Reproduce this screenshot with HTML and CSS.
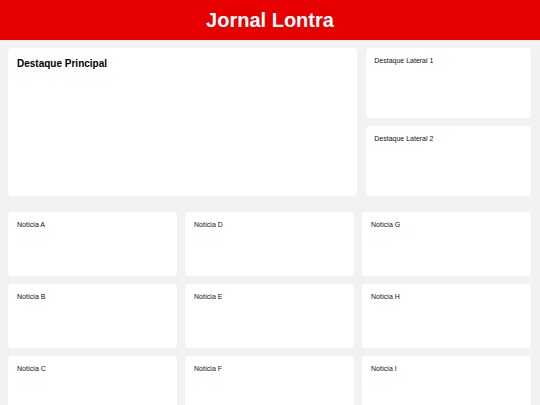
FILE: index.html
```html
<!DOCTYPE html>
<html lang="pt">
<head>
<meta charset="utf-8">
<title>Jornal Lontra</title>
<link rel="stylesheet" href="styles.css">
</head>
<body>
<header class="site-header">
  <h1 class="site-title">Jornal Lontra</h1>
</header>
<section class="highlights">
  <article class="card card-main"><h2 class="main-title">Destaque Principal</h2></article>
  <div class="side">
    <article class="card card-side"><h3 class="label">Destaque Lateral 1</h3></article>
    <article class="card card-side"><h3 class="label">Destaque Lateral 2</h3></article>
  </div>
</section>
<section class="news">
  <article class="card card-news"><h3 class="label">Notícia A</h3></article>
  <article class="card card-news"><h3 class="label">Notícia D</h3></article>
  <article class="card card-news"><h3 class="label">Notícia G</h3></article>
  <article class="card card-news"><h3 class="label">Notícia B</h3></article>
  <article class="card card-news"><h3 class="label">Notícia E</h3></article>
  <article class="card card-news"><h3 class="label">Notícia H</h3></article>
  <article class="card card-news"><h3 class="label">Notícia C</h3></article>
  <article class="card card-news"><h3 class="label">Notícia F</h3></article>
  <article class="card card-news"><h3 class="label">Notícia I</h3></article>
</section>
</body>
</html>
```
FILE: styles.css
```css
* { box-sizing: border-box; }
html, body {
  margin: 0;
  padding: 0;
  background: #f2f2f2;
  font-family: "Liberation Sans", Arial, sans-serif;
  color: #111;
}
.site-header {
  background: #e60000;
  height: 40px;
  display: flex;
  align-items: center;
  justify-content: center;
}
.site-title {
  margin: 0;
  color: #fff;
  font-size: 20px;
  font-weight: bold;
  line-height: 1;
}
.highlights {
  display: grid;
  grid-template-columns: 2.12fr 1fr;
  column-gap: 9px;
  padding: 8px 9px 8px 8px;
}
.side {
  display: grid;
  grid-template-rows: 70px 70px;
  row-gap: 8px;
}
.card {
  background: #fff;
  border-radius: 4px;
  margin: 0;
}
.card-main {
  height: 148px;
  padding: 9px;
}
.card-side {
  padding: 8px;
}
.main-title {
  margin: 0;
  font-size: 10px;
  font-weight: bold;
  line-height: 13px;
  color: #000;
}
.label {
  margin: 0;
  font-size: 7px;
  font-weight: normal;
  line-height: 9px;
  color: #111;
}
.news {
  display: grid;
  grid-template-columns: 1fr 1fr 1fr;
  gap: 8px;
  padding: 8px 9px 8px 8px;
}
.card-news {
  height: 64px;
  padding: 8px 9px;
}
```
